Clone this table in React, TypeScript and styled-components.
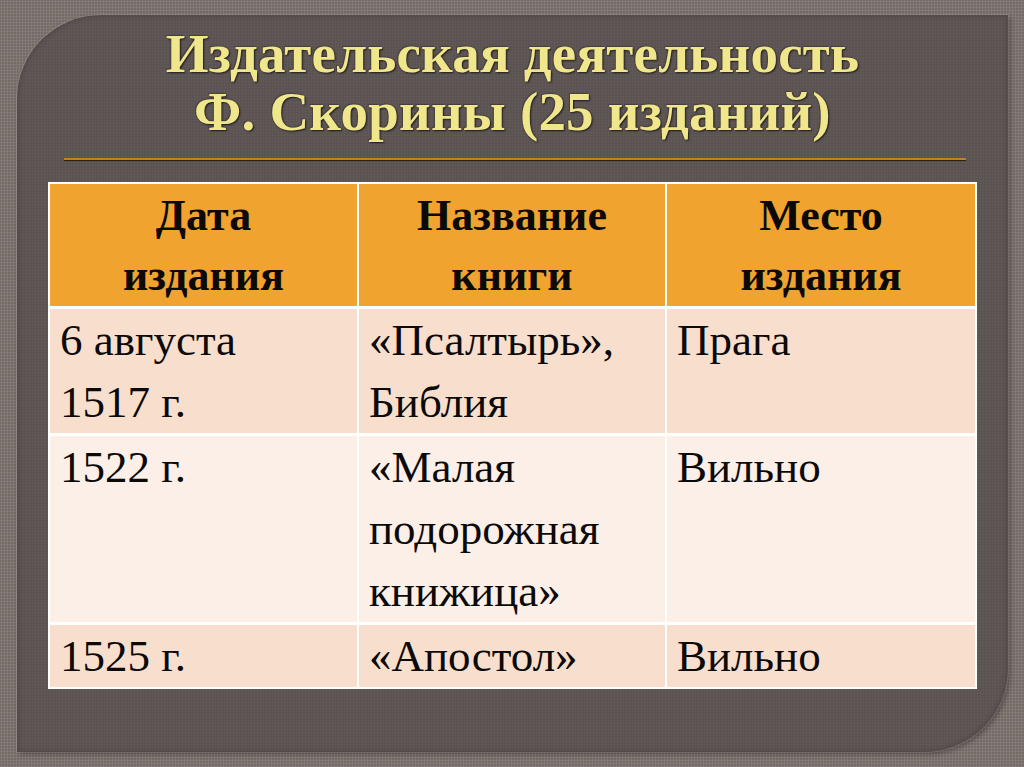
import React from "react";
import styled, { createGlobalStyle } from "styled-components";

const Global = createGlobalStyle`
  html, body { margin: 0; padding: 0; }
  body { width: 1024px; height: 767px; overflow: hidden; background: #726866; }
  * { box-sizing: border-box; }
`;

const Page = styled.div`
  width: 1024px;
  height: 767px;
  padding: 15px 18px 15px 17px;
  background-color: #746a66;
  background-image: radial-gradient(circle, rgba(255, 255, 255, 0.13) 0.9px, transparent 1.3px);
  background-size: 3px 3px;
  display: flex;
`;

const Panel = styled.div`
  flex: 1;
  display: flex;
  flex-direction: column;
  border-radius: 84px 0 84px 0;
  background-color: #5b5351;
  background-image:
    linear-gradient(rgba(255, 255, 255, 0.025) 1px, transparent 1px),
    linear-gradient(90deg, rgba(255, 255, 255, 0.025) 1px, transparent 1px);
  background-size: 3px 3px;
  box-shadow: 0 0 0 1px rgba(255, 255, 255, 0.14), 2px 2px 5px rgba(0, 0, 0, 0.35),
    inset 0 0 6px rgba(0, 0, 0, 0.25);
  padding: 0 31px 0 31px;
`;

const Title = styled.h1`
  margin: 10px 0 0 0;
  font-family: "Liberation Serif", "DejaVu Serif", serif;
  font-weight: bold;
  font-size: 55px;
  line-height: 58px;
  letter-spacing: 0.2px;
  text-align: center;
  color: #f0e68c;
  text-shadow: 1px 1px 2px rgba(0, 0, 0, 0.7), -1px -1px 1px rgba(0, 0, 0, 0.25);
`;

const Divider = styled.div`
  height: 2px;
  margin: 17px 11px 22px 16px;
  background: #c8801e;
  box-shadow: 0 1px 1px rgba(40, 20, 0, 0.9);
`;

const Table = styled.table`
  width: 100%;
  border-collapse: collapse;
  table-layout: fixed;
  font-family: "Liberation Serif", "Times New Roman", serif;
  color: #0c0a09;
`;

const HeadCell = styled.th`
  border: 2px solid #fff;
  border-bottom-width: 3px;
  background: #f0a32f;
  font-size: 44px;
  font-weight: bold;
  line-height: 60px;
  padding: 2px 4px 0 4px;
  text-align: center;
  vertical-align: top;
`;

const Cell = styled.td<{ $tone: "dark" | "light" }>`
  border: 2px solid #fff;
  border-top-width: 3px;
  background: ${(p) => (p.$tone === "dark" ? "#f8dfcd" : "#fbefe7")};
  font-size: 45px;
  line-height: 62px;
  padding: 0 8px 0 10px;
  text-align: left;
  vertical-align: top;
`;

const rows: { tone: "dark" | "light"; cells: React.ReactNode[] }[] = [
  {
    tone: "dark",
    cells: [
      <>6 августа<br />1517 г.</>,
      <>«Псалтырь»,<br />Библия</>,
      <>Прага</>,
    ],
  },
  {
    tone: "light",
    cells: [
      <>1522 г.</>,
      <>«Малая<br />подорожная<br />книжица»</>,
      <>Вильно</>,
    ],
  },
  {
    tone: "dark",
    cells: [<>1525 г.</>, <>«Апостол»</>, <>Вильно</>],
  },
];

export default function App() {
  return (
    <>
      <Global />
      <Page>
        <Panel>
          <Title>
            Издательская деятельность
            <br />
            Ф. Скорины (25 изданий)
          </Title>
          <Divider />
          <Table>
            <colgroup>
              <col style={{ width: "309px" }} />
              <col style={{ width: "308px" }} />
              <col style={{ width: "310px" }} />
            </colgroup>
            <thead>
              <tr>
                <HeadCell>Дата<br />издания</HeadCell>
                <HeadCell>Название<br />книги</HeadCell>
                <HeadCell>Место<br />издания</HeadCell>
              </tr>
            </thead>
            <tbody>
              {rows.map((r, i) => (
                <tr key={i}>
                  {r.cells.map((c, j) => (
                    <Cell key={j} $tone={r.tone}>
                      {c}
                    </Cell>
                  ))}
                </tr>
              ))}
            </tbody>
          </Table>
        </Panel>
      </Page>
    </>
  );
}
